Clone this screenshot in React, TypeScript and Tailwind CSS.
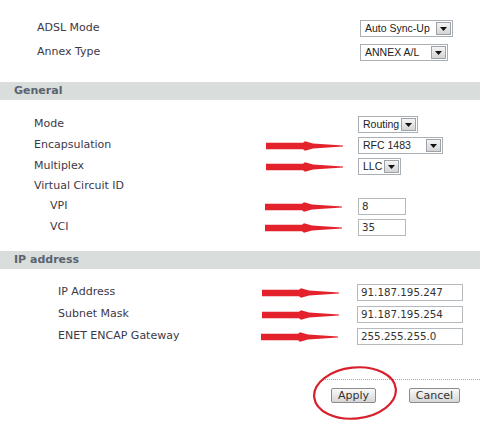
import React from 'react';

const labelFont = { fontFamily: '"DejaVu Sans", Verdana, sans-serif' };

function RedArrow() {
  return (
    <svg width="78" height="12" viewBox="0 0 78 12" className="block">
      <path
        d="M0 2.8 L37 2.8 L39 1.2 L47 3.6 L77 5.6 L77 6.4 L47 8.4 L39 10.8 L37 9.2 L0 9.2 Z"
        fill="#e4222b"
      />
    </svg>
  );
}

function Select({ value, width }: { value: string; width: number }) {
  return (
    <div
      className="h-[17px] flex items-center justify-between bg-white border border-[#a9b0b5] pl-[4px] pr-[1px]"
      style={{ width }}
    >
      <span className="text-[10.5px] text-[#222] leading-none font-['Liberation_Sans',Arial,sans-serif]">
        {value}
      </span>
      <span className="w-[15px] h-[13px] flex items-center justify-center border border-[#9da3a8] bg-gradient-to-b from-[#f4f4f4] to-[#d4d4d4]">
        <svg width="7" height="4" viewBox="0 0 7 4">
          <path d="M0 0 L7 0 L3.5 4 Z" fill="#111" />
        </svg>
      </span>
    </div>
  );
}

function Input({ value, width }: { value: string; width: number }) {
  return (
    <div
      className="h-[17px] flex items-center bg-white border border-[#b4babe] pl-[3px] text-[10.3px] text-[#333] leading-none"
      style={{ width, ...labelFont }}
    >
      {value}
    </div>
  );
}

interface RowProps {
  label: string;
  indent: number;
  arrowAt?: number;
  controlAt: number;
  children?: React.ReactNode;
  className?: string;
}

function Row({ label, indent, arrowAt, controlAt, children, className = '' }: RowProps) {
  return (
    <div className={`flex items-center h-[17px] ${className}`}>
      <div
        className="shrink-0 flex items-center text-[11px] text-[#3d3747]"
        style={{ width: controlAt, paddingLeft: indent, ...labelFont }}
      >
        <span className="flex-1">{label}</span>
        {arrowAt !== undefined && (
          <span className="shrink-0" style={{ marginRight: controlAt - arrowAt - 78 }}>
            <RedArrow />
          </span>
        )}
      </div>
      {children}
    </div>
  );
}

function SectionBar({ title }: { title: string }) {
  return (
    <div
      className="h-[18px] bg-[#d9dddc] flex items-center pl-[14px] text-[11px] font-bold text-[#5a6470]"
      style={labelFont}
    >
      {title}
    </div>
  );
}

export default function App() {
  return (
    <div className="w-[480px] h-[426px] bg-white overflow-hidden">
      {/* ADSL */}
      <div className="pt-[20px] pb-[21px] flex flex-col gap-[7px]">
        <Row label="ADSL Mode" indent={37} controlAt={360}>
          <Select value="Auto Sync-Up" width={93} />
        </Row>
        <Row label="Annex Type" indent={37} controlAt={360}>
          <Select value="ANNEX A/L" width={88} />
        </Row>
      </div>

      <SectionBar title="General" />

      <div className="pt-[16px] pb-[15px] flex flex-col">
        <Row label="Mode" indent={34} controlAt={358}>
          <Select value="Routing" width={60} />
        </Row>
        <Row label="Encapsulation" indent={34} arrowAt={266} controlAt={358} className="mt-[4px]">
          <Select value="RFC 1483" width={85} />
        </Row>
        <Row label="Multiplex" indent={34} arrowAt={266} controlAt={358} className="mt-[4px]">
          <Select value="LLC" width={43} />
        </Row>
        <Row label="Virtual Circuit ID" indent={34} controlAt={358} className="mt-[3px]" />
        <Row label="VPI" indent={50} arrowAt={265} controlAt={358} className="mt-[3px]">
          <Input value="8" width={48} />
        </Row>
        <Row label="VCI" indent={50} arrowAt={265} controlAt={358} className="mt-[4px]">
          <Input value="35" width={48} />
        </Row>
      </div>

      <SectionBar title="IP address" />

      <div className="pt-[15px] flex flex-col gap-[5px]">
        <Row label="IP Address" indent={58} arrowAt={262} controlAt={357}>
          <Input value="91.187.195.247" width={106} />
        </Row>
        <Row label="Subnet Mask" indent={58} arrowAt={262} controlAt={357}>
          <Input value="91.187.195.254" width={106} />
        </Row>
        <Row label="ENET ENCAP Gateway" indent={58} arrowAt={261} controlAt={357}>
          <Input value="255.255.255.0" width={106} />
        </Row>
      </div>

      {/* Buttons */}
      <div className="relative mt-[34px]">
        <div className="ml-[322px] border-t border-dotted border-[#a8a8a8]" />
        <div className="flex gap-[33px] pl-[331px] pt-[8px]">
          <button
            className="w-[45px] h-[15px] flex items-center justify-center border border-[#8c8c8c] rounded-[2px] bg-gradient-to-b from-[#fafafa] to-[#d6d6d6] text-[11px] text-[#333] leading-none"
            style={labelFont}
          >
            Apply
          </button>
          <button
            className="w-[51px] h-[15px] flex items-center justify-center border border-[#8c8c8c] rounded-[2px] bg-gradient-to-b from-[#fafafa] to-[#d6d6d6] text-[11px] text-[#333] leading-none"
            style={labelFont}
          >
            Cancel
          </button>
        </div>
        <svg
          width="88"
          height="56"
          viewBox="0 0 88 56"
          className="absolute left-[311px] top-[-14px] pointer-events-none"
        >
          <ellipse
            cx="44"
            cy="28"
            rx="41"
            ry="25.5"
            fill="none"
            stroke="#d8202c"
            strokeWidth="2.2"
            transform="rotate(-6 44 28)"
          />
        </svg>
      </div>
    </div>
  );
}
